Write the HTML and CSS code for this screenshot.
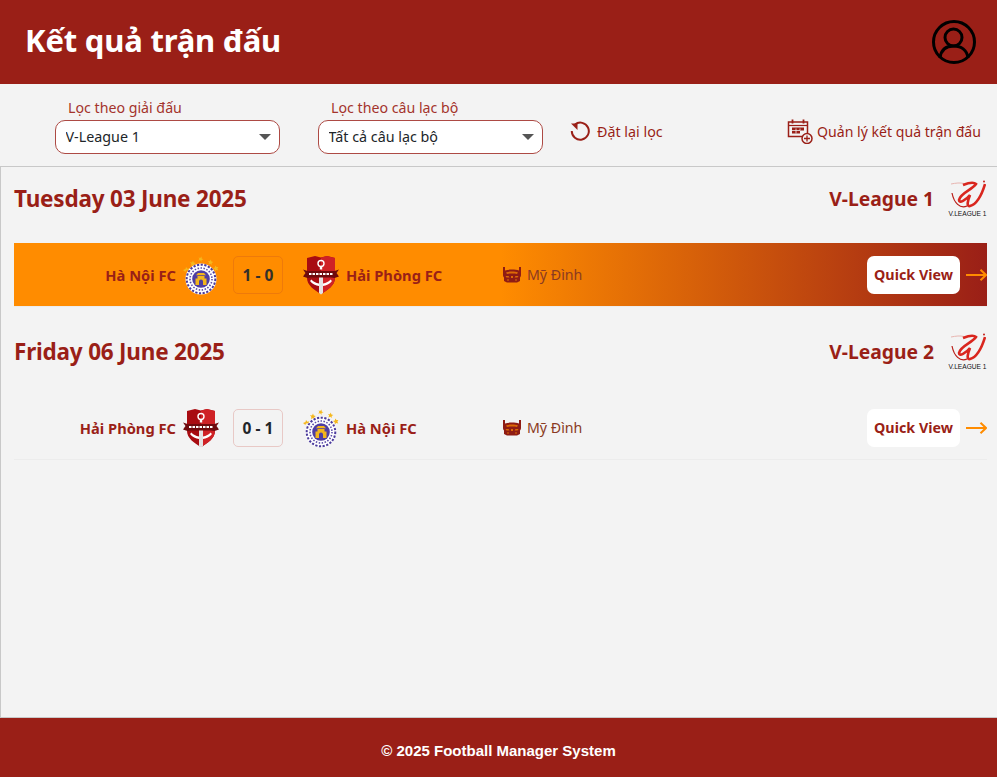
FILE: index.html
```html
<!DOCTYPE html>
<html lang="vi">
<head>
<meta charset="utf-8">
<title>Kết quả trận đấu</title>
<link rel="stylesheet" href="styles.css">
</head>
<body>
<svg class="defs" width="0" height="0" aria-hidden="true">
  <defs>
    <symbol id="hanoi" viewBox="0 0 36 40">
      <g fill="#f5b81e">
        <path d="M0 15l2.500-1 .5-2 1.500 1.700 2-.4-1 2-2.500.2-.7 1.500z"/>
        <path d="M7 7l2 .4 1-1.800.8 2 2 .4-1.600 1.300.2 2-1.700-1-1.800.8.500-2z"/>
        <path d="M15.500 2.500l1.700.6 1.300-1.600.2 2 1.800.8-1.900.6-.2 2-1.200-1.600-2 .3 1.200-1.600z"/>
        <path d="M25 6l1.800.2 1-1.700.6 1.900 2 .5-1.700 1.100.1 2-1.500-1.200-1.900.7.700-1.900z"/>
        <path d="M30 13l1.900-.6.300-1.800 1.300 1.500 1.900-.2-1 1.700.8 1.800-1.900-.4-1.400 1.300-.2-2z"/>
      </g>
      <circle cx="18" cy="24" r="15.500" fill="#fff"/>
      <circle cx="18" cy="24" r="14.300" fill="none" stroke="#4a3a9c" stroke-width="2" stroke-dasharray="2.200 1.500"/>
      <circle cx="18" cy="24" r="11" fill="none" stroke="#5a4aa8" stroke-width="1.600" stroke-dasharray="1.500 1.500"/>
      <circle cx="18" cy="24" r="8.800" fill="#4f3ea3"/>
      <path d="M12.500 30v-6.500h2V21h7v2.500h2V30h-3.500v-3.500a2 2 0 0 0-4 0V30z" fill="#f3b51c"/>
      <path d="M13 20.300h10l-2-2.300h-6z" fill="#f3b51c"/>
    </symbol>
    <symbol id="haiphong" viewBox="0 0 36 40">
      <path d="M4 3l8-2 6 1.500L24 1l8 2v20c0 7-7 12-14 16C11 35 4 30 4 23z" fill="#a80c11"/>
      <path d="M18 2.500L24 1l8 2v20c0 7-7 12-14 16z" fill="#cf2226"/>
      <circle cx="18" cy="8.500" r="3" fill="none" stroke="#fff" stroke-width="1.400"/>
      <path d="M16.800 11.500h2.400v3h-2.400z" fill="#fff"/>
      <path d="M16 22h4v16l-2 1.500-2-1.500z" fill="#e4e4e4"/>
      <path d="M7 26c2 3 6 4.500 9 5v-2.500c-3-.5-6-2-7.500-4zM29 26c-2 3-6 4.500-9 5v-2.500c3-.5 6-2 7.500-4z" fill="#fff"/>
      <path d="M0 14.500l4.500 1.500h27l4.500-1.500-2.500 3.500 2.500 3.500-4.500 1.500-3.500-.5H8l-3.500.5L0 21.500 2.500 18z" fill="#6f0a0d"/>
      <path d="M6 19h24" stroke="#fff" stroke-width="2.200" stroke-dasharray="2.500 1"/>
    </symbol>
    <symbol id="vleague" viewBox="0 0 36 29">
      <path d="M1 4c5-1 9-1.500 13-.5" stroke="#e8b5b0" stroke-width="1" fill="none"/>
      <path d="M13 5C18 3 24 2 26 4 22 10 10 13 9 20c0 4 7 0 11-5-2 5-4 12 0 11 7-2 12-12 15-22" stroke="#d9261e" stroke-width="2.600" fill="none"/>
      <path d="M2 13c2 10 8 16 15 13" stroke="#b81c16" stroke-width="1.200" fill="none"/>
      <circle cx="34" cy="1.500" r="1" fill="#c4201a"/>
    </symbol>
    <symbol id="stadium" viewBox="0 0 20 17">
      <path d="M1 1h2v3.500C7 3.300 13 3.300 17 4.500V1h2v8c0 1-.5 2-1 2.500V15l-3 1.500H5L2 15v-3.500C1.500 11 1 10 1 9z" fill="#8f1c14"/>
      <path d="M4 6.500c3-1.200 9-1.200 12 0l-1 1.500c-2.500-.8-7.500-.8-10 0zM3.500 10h3l1 1.500h-3zM16.500 10h-3l-1 1.500h3zM9 10h2v2H9zM5 13.500h2v1H5zM13 13.500h2v1h-2z" fill="#ff8c00" opacity=".7"/>
    </symbol>
    <symbol id="arrow" viewBox="0 0 21 12">
      <path d="M0 6h20M14.500 .8L20 6l-5.500 5.200" fill="none" stroke="#ff8c00" stroke-width="2"/>
    </symbol>
  </defs>
</svg>

<div class="page">
  <header class="topbar">
    <h1 class="title">Kết quả trận đấu</h1>
    <svg class="user-icon" viewBox="0 0 44 44" aria-hidden="true">
      <circle cx="22" cy="22" r="20.500" fill="none" stroke="#000" stroke-width="3"/>
      <circle cx="21.500" cy="17.500" r="8.500" fill="none" stroke="#000" stroke-width="3"/>
      <path d="M8 38c1-8 6-12 13.500-12S35 30 36 38" fill="none" stroke="#000" stroke-width="3"/>
    </svg>
  </header>

  <section class="filters">
    <div class="filter">
      <label class="filter-label" for="league">Lọc theo giải đấu</label>
      <div class="select-wrap">
        <select class="select" id="league"><option>V-League 1</option><option>V-League 2</option></select>
        <span class="caret"></span>
      </div>
    </div>
    <div class="filter">
      <label class="filter-label" for="club">Lọc theo câu lạc bộ</label>
      <div class="select-wrap">
        <select class="select" id="club"><option>Tất cả câu lạc bộ</option></select>
        <span class="caret"></span>
      </div>
    </div>
    <a class="tool reset">
      <svg class="reset-icon" viewBox="0 0 20 20" aria-hidden="true">
        <path d="M5 3.500A8.500 8.500 0 1 1 1.800 10" fill="none" stroke="#9a1f17" stroke-width="2"/>
        <path d="M1 2.500h6.500V9z" fill="#9a1f17"/>
      </svg>
      <span>Đặt lại lọc</span>
    </a>
    <a class="tool manage">
      <svg class="manage-icon" viewBox="0 0 26 25" aria-hidden="true">
        <path d="M17 17.500H1.500V3h19v11" fill="none" stroke="#9a1f17" stroke-width="1.500"/>
        <path d="M1.500 6.500h19" stroke="#9a1f17" stroke-width="1.200"/>
        <path d="M5.500 .5v4M16.500 .5v4" stroke="#9a1f17" stroke-width="1.800"/>
        <path d="M5 8.500h12v3H13v3H5z" fill="#9a1f17"/>
        <path d="M9 9.500v5M13 9.500v2M5 11.500h8" stroke="#f3f3f3" stroke-width=".8"/>
        <circle cx="20" cy="19.500" r="5" fill="#f3f3f3" stroke="#9a1f17" stroke-width="1.500"/>
        <path d="M17 19.500h6M20 16.500v6" stroke="#9a1f17" stroke-width="1.300"/>
      </svg>
      <span>Quản lý kết quả trận đấu</span>
    </a>
  </section>

  <main class="content">
    <section class="day">
      <div class="day-head">
        <h2 class="day-date">Tuesday 03 June 2025</h2>
        <div class="league">
          <span class="league-name">V-League 1</span>
          <div class="league-logo">
            <svg class="league-mark" aria-hidden="true"><use href="#vleague"/></svg>
            <span class="league-cap">V.LEAGUE 1</span>
          </div>
        </div>
      </div>
      <div class="match match-live">
        <div class="team team-home"><span>Hà Nội FC</span><svg class="crest" aria-hidden="true"><use href="#hanoi"/></svg></div>
        <div class="score score-live">1 - 0</div>
        <div class="team team-away"><svg class="crest" aria-hidden="true"><use href="#haiphong"/></svg><span>Hải Phòng FC</span></div>
        <div class="venue"><svg class="venue-icon" aria-hidden="true"><use href="#stadium"/></svg><span>Mỹ Đình</span></div>
        <button class="quick">Quick View</button>
        <svg class="arrow" aria-hidden="true"><use href="#arrow"/></svg>
      </div>
    </section>

    <section class="day">
      <div class="day-head">
        <h2 class="day-date">Friday 06 June 2025</h2>
        <div class="league">
          <span class="league-name">V-League 2</span>
          <div class="league-logo">
            <svg class="league-mark" aria-hidden="true"><use href="#vleague"/></svg>
            <span class="league-cap">V.LEAGUE 1</span>
          </div>
        </div>
      </div>
      <div class="match">
        <div class="team team-home"><span>Hải Phòng FC</span><svg class="crest" aria-hidden="true"><use href="#haiphong"/></svg></div>
        <div class="score">0 - 1</div>
        <div class="team team-away"><svg class="crest" aria-hidden="true"><use href="#hanoi"/></svg><span>Hà Nội FC</span></div>
        <div class="venue"><svg class="venue-icon" aria-hidden="true"><use href="#stadium"/></svg><span>Mỹ Đình</span></div>
        <button class="quick">Quick View</button>
        <svg class="arrow" aria-hidden="true"><use href="#arrow"/></svg>
      </div>
    </section>
  </main>

  <footer class="footer">© 2025 Football Manager System</footer>
</div>
</body>
</html>
```

FILE: styles.css
```css
* { box-sizing: border-box; }
html, body { margin: 0; height: 100%; }
body {
  background: #f3f3f3;
  font-family: "Noto Sans", "Open Sans", "Liberation Sans", sans-serif;
  color: #9a1f17;
}
.defs { position: absolute; }
.page { display: flex; flex-direction: column; height: 100vh; overflow: hidden; }

.topbar {
  flex: 0 0 84px;
  background: #9a1f17;
  display: flex;
  align-items: center;
  justify-content: space-between;
  padding: 0 21px 0 25px;
}
.title { margin: 0 0 4px; font-size: 31px; font-weight: 700; color: #fff; letter-spacing: -.2px; }
.user-icon { width: 44px; height: 44px; display: block; }

.filters {
  flex: 0 0 82px;
  display: flex;
  align-items: flex-start;
  padding: 14px 16px 0 55px;
}
.filter { width: 225px; margin-right: 38px; }
.filter + .filter { margin-right: 27px; }
.filter-label { display: block; padding-left: 13px; font-size: 14.2px; line-height: 20px; margin-bottom: 2px; color: #a4342c; }
.select-wrap { position: relative; }
.select {
  appearance: none;
  display: block;
  width: 100%;
  height: 34px;
  padding: 0 30px 2px 9.500px;
  border: 1.500px solid #ad4a44;
  border-radius: 10px;
  background: #fff;
  color: #212529;
  font: 14.300px "Noto Sans", sans-serif;
}
.caret {
  position: absolute;
  right: 9px;
  top: 14px;
  border-left: 6px solid transparent;
  border-right: 6px solid transparent;
  border-top: 6px solid #555;
  pointer-events: none;
}
.tool { display: flex; align-items: center; font-size: 14.300px; color: #9a1f17; margin-top: 21px; height: 24px; }
.reset-icon { width: 20px; height: 20px; margin-right: 7px; }
.manage { margin-left: auto; font-size: 14.100px; }
.manage-icon { width: 26px; height: 25px; margin-right: 4px; }

.content {
  flex: 1;
  border: solid #c8c8c8;
  border-width: 1px 0 1px 1px;
  padding: 0 10px 0 13px;
}
.day { margin-bottom: 13px; }
.day-head { height: 64px; margin-bottom: 12px; padding-bottom: 2px; display: flex; align-items: center; justify-content: space-between; }
.day-date { margin: 0; font-size: 22.500px; font-weight: 700; letter-spacing: -.2px; }
.league { display: flex; align-items: center; }
.league-name { font-size: 19.300px; font-weight: 700; }
.league-logo { width: 39px; margin-left: 14px; display: flex; flex-direction: column; align-items: center; }
.league-mark { width: 36px; height: 29px; display: block; margin-bottom: 1px; }
.league-cap { font: 6.600px/7px "Liberation Sans", sans-serif; color: #111; white-space: nowrap; }

.match {
  height: 64px;
  display: flex;
  align-items: center;
  border-bottom: 1px solid #ececec;
}
.match-live { background: linear-gradient(to right, #ff8c00 50%, #9a1f17); }
.team { display: flex; align-items: center; gap: 7px; font-size: 14.700px; font-weight: 700; }
.team-home { width: 205px; justify-content: flex-end; }
.team-away { width: 200px; margin-left: 20px; }
.crest { width: 36px; height: 40px; display: block; flex: none; }
.score {
  width: 50px;
  height: 38px;
  margin-left: 14px;
  display: flex;
  align-items: center;
  justify-content: center;
  border: 1.500px solid #e8c9c6;
  border-radius: 5px;
  font-size: 15.500px;
  font-weight: 700;
  color: #212529;
}
.score-live { border-color: #ee7a0a; color: #33302a; }
.venue { display: flex; align-items: center; font-size: 14.200px; color: #8a3a22; }
.venue-icon { width: 20px; height: 17px; margin-right: 5px; margin-left: -1px; }
.quick {
  margin-left: auto;
  width: 93px;
  height: 38px;
  padding: 0;
  border: 0;
  border-radius: 7px;
  background: #fff;
  color: #9a1f17;
  font: 700 14.300px "Noto Sans", sans-serif;
}
.arrow { width: 21px; height: 12px; margin-left: 6px; }

.footer {
  flex: 0 0 59px;
  background: #9a1f17;
  color: #fff;
  display: flex;
  align-items: center;
  justify-content: center;
  font: 700 15px "Liberation Sans", sans-serif;
  padding-top: 5px;
}
```
